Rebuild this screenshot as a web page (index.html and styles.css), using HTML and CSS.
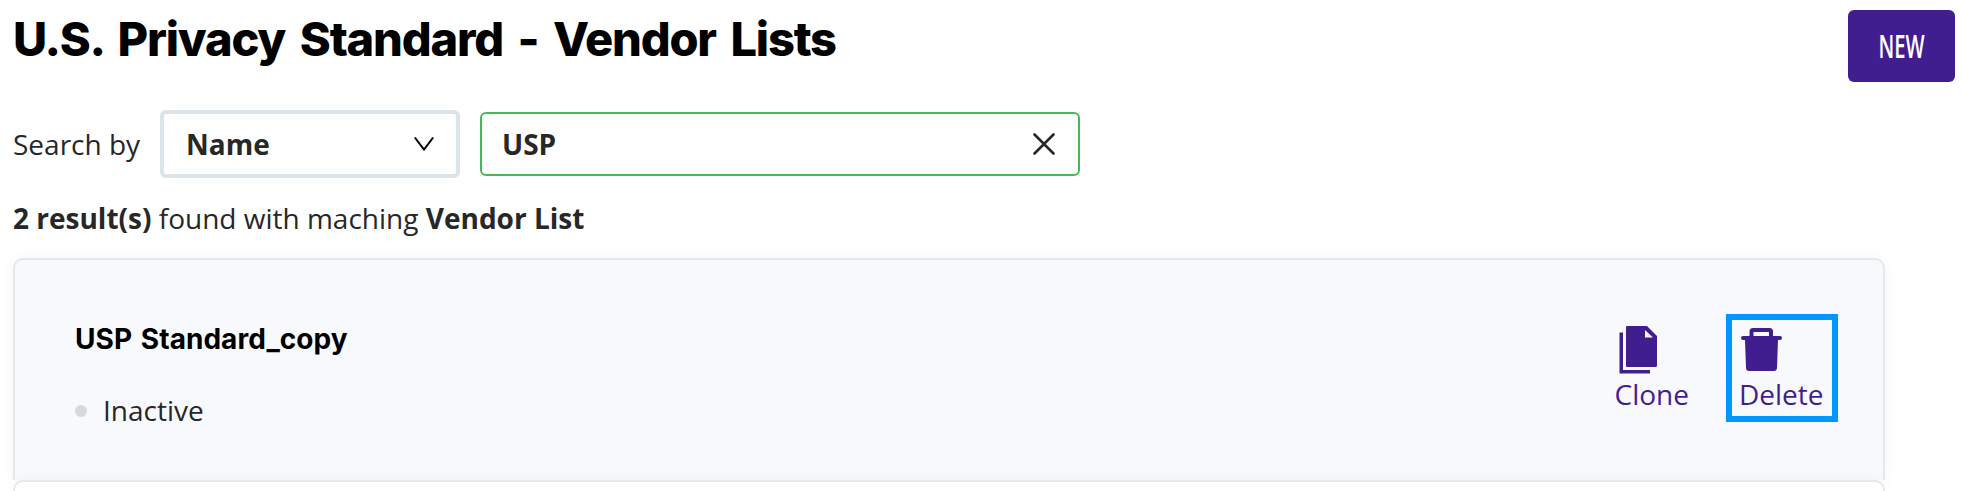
FILE: index.html
```html
<!DOCTYPE html>
<html lang="en">
<head>
    <meta charset="UTF-8">
    <meta name="viewport" content="width=device-width, initial-scale=1.0">
    <title>U.S. Privacy Standard - Vendor Lists</title>
    <link rel="stylesheet" href="styles.css">
</head>
<body>
    <header class="page-header">
        <h1 class="page-title">U.S. Privacy Standard - Vendor Lists</h1>
        <button class="btn-new" type="button"><span>NEW</span></button>
    </header>

    <div class="search">
        <span class="search-label">Search by</span>
        <div class="select">
            <span>Name</span>
            <svg width="20" height="14" viewBox="0 0 20 14"><path d="M0.8 0.5 L10 12.5 L19.2 0.5" fill="none" stroke="#000" stroke-width="2"/></svg>
        </div>
        <div class="search-input">
            <span>USP</span>
            <svg width="22" height="22" viewBox="0 0 22 22"><path d="M1.5 1.5 L20.5 20.5 M20.5 1.5 L1.5 20.5" stroke="#272727" stroke-width="2.6" stroke-linecap="round"/></svg>
        </div>
    </div>

    <p class="results"><b>2 result(s)</b> found with maching <b>Vendor List</b></p>

    <div class="list">
        <div class="card">
            <div class="card-info">
                <h2 class="card-title">USP Standard_copy</h2>
                <div class="status"><span class="dot"></span><span class="status-text">Inactive</span></div>
            </div>
            <div class="actions">
                <a class="action">
                    <svg width="46" height="49" viewBox="0 0 46 49">
                        <path d="M4.500 6.500h3.500v37.500h27v3.500h-30.500z"/>
                        <path fill-rule="evenodd" d="M12 0h20l10 10v29.500q0 1.500-1.500 1.500h-28.500q-1 0-1-1V1q0-1 1-1zM30 4v7.500h8z"/>
                    </svg>
                    <span>Clone</span>
                </a>
                <a class="action action-delete">
                    <svg width="46" height="49" viewBox="0 0 46 49">
                        <path fill-rule="evenodd" d="M14 2h16.500q3.500 0 3.500 3.500v4.500h7q2 0 2 2t-2 2h-2l-1 28q-.2 3-3 3h-25q-2.800 0-3-3l-1-28H4q-2 0-2-2t2-2h6.500v-4.500q0-3.500 3.500-3.500zM14.500 6v4h15.500v-4z"/>
                    </svg>
                    <span>Delete</span>
                </a>
            </div>
        </div>
        <div class="card card-next"></div>
    </div>
</body>
</html>
```

FILE: styles.css
```css
body {
    height: 491px;
    margin: 0;
    padding: 10px 7px 0 13px;
    box-sizing: border-box;
    overflow: hidden;
    background-color: #fff;
    color: #272727;
    font-family: "Open Sans", sans-serif;
    font-size: 28px;
    line-height: 40px;
}
.page-header {
    display: flex;
    justify-content: space-between;
    height: 72px;
}
.page-title {
    margin: 0;
    color: #000;
    font-family: Inter, sans-serif;
    font-size: 47px;
    font-weight: 800;
    line-height: 58px;
    letter-spacing: -1.2px;
    word-spacing: 5.5px;
    white-space: nowrap;
}
.btn-new {
    width: 107px;
    height: 72px;
    padding: 0 0 2px;
    border: none;
    border-radius: 6px;
    background-color: #411e8f;
    color: #fff;
    font-family: "Open Sans", sans-serif;
    font-size: 32px;
    font-weight: 600;
}
.btn-new span {
    display: inline-block;
    transform: scaleX(0.63);
}
.search {
    display: flex;
    align-items: center;
    height: 68px;
    margin-top: 28px;
}
.search-label {
    width: 147px;
}
.select,
.search-input {
    display: flex;
    align-items: center;
    justify-content: space-between;
    box-sizing: border-box;
    border-radius: 6px;
    font-weight: bold;
}
.select {
    width: 300px;
    height: 68px;
    margin-right: 20px;
    padding: 0 22px;
    border: 4px solid #d9e4eb;
}
.search-input {
    width: 600px;
    height: 64px;
    padding: 0 23px 0 20px;
    border: 2px solid #45b955;
}
.results {
    margin: 20px 0 0;
}
.list {
    width: 1872px;
    margin-top: 20px;
}
.card {
    display: flex;
    justify-content: space-between;
    box-sizing: border-box;
    height: 222px;
    padding: 54px 45px 0 60px;
    border: 2px solid #e4e9ed;
    border-bottom: none;
    border-radius: 10px 10px 0 0;
    background-color: #f8f9fd;
    box-shadow: 0 0 16px rgba(0, 0, 0, 0.04);
}
.card-next {
    height: 11px;
    padding: 0;
    background-color: #fff;
}
.card-title {
    margin: 5px 0 31px;
    color: #000;
    font-family: Inter, sans-serif;
    font-size: 28px;
    font-weight: 700;
    line-height: 40px;
    letter-spacing: 0.05px;
    word-spacing: 2px;
}
.status {
    display: flex;
    align-items: center;
}
.dot {
    width: 12px;
    height: 12px;
    margin: 2px 16px 0 0;
    border-radius: 50%;
    background-color: #d8d8d8;
}
.actions {
    display: flex;
    align-items: flex-start;
    gap: 37px;
}
.action {
    display: flex;
    flex-direction: column;
    padding-top: 12px;
    color: #411e8f;
    line-height: 38px;
}
.action svg {
    display: block;
    fill: #411e8f;
}
.action-delete {
    box-sizing: border-box;
    width: 112px;
    height: 108px;
    padding: 6px 0 0 7px;
    border: 6px solid #0496ff;
}
```
